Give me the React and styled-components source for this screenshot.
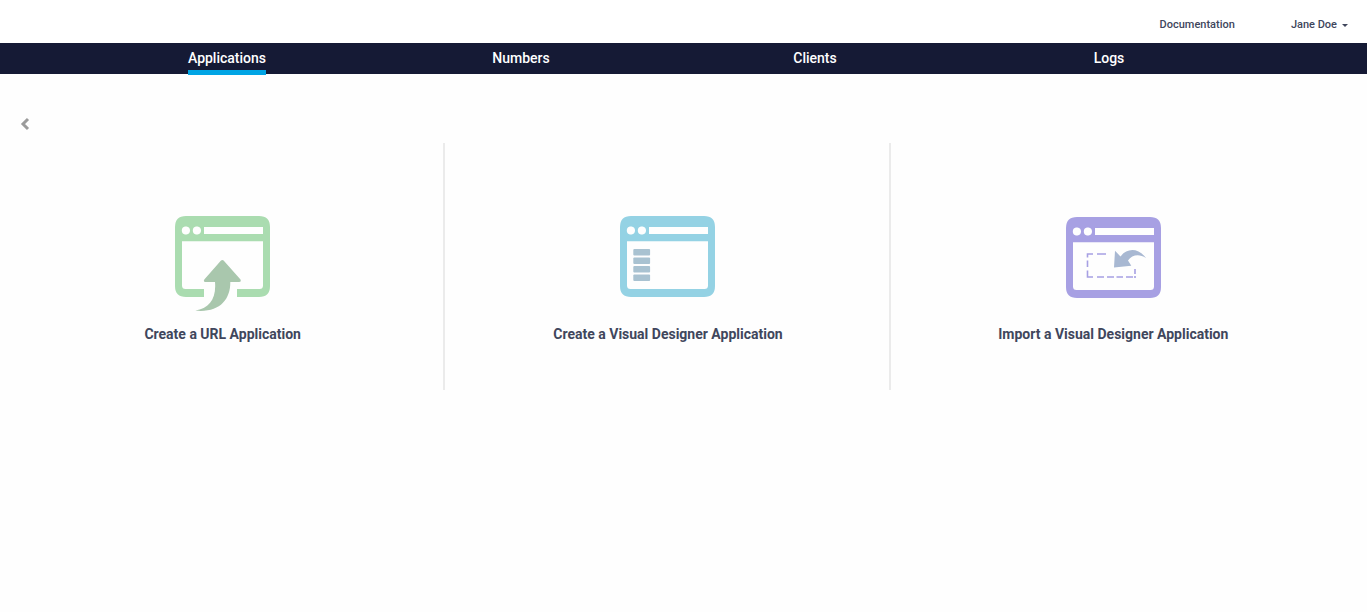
import React from "react";
import styled, { createGlobalStyle } from "styled-components";

const GlobalStyle = createGlobalStyle`
  *, *::before, *::after { box-sizing: border-box; }
  body {
    margin: 0;
    background: #fefefe;
    color: #40465c;
    font-family: Roboto, "Liberation Sans", sans-serif;
  }
  a { color: inherit; text-decoration: none; }
`;

const TopBar = styled.header`
  display: flex;
  justify-content: flex-end;
  align-items: center;
  gap: 56px;
  padding: 17px 19px 10px;
  background: #fff;
  font-size: 11px;
  font-weight: 500;
  line-height: 16px;
`;

const DocLink = styled.a``;

const UserButton = styled.button`
  display: flex;
  align-items: center;
  gap: 5px;
  padding: 0;
  border: 0;
  background: none;
  color: inherit;
  font: inherit;
  cursor: pointer;
`;

const Caret = styled.span`
  margin-top: 1px;
  border: 3px solid transparent;
  border-top-color: currentColor;
  border-bottom-width: 0;
`;

const NavBar = styled.nav`
  display: grid;
  grid-template-columns: repeat(4, 1fr);
  justify-items: center;
  height: 31px;
  padding: 0 111px 0 80px;
  background: #151a35;
`;

const NavLink = styled.a`
  height: 32px;
  color: #fff;
  font-size: 14px;
  font-weight: 500;
  line-height: 30px;
  box-shadow: ${({ $active }) => ($active ? "inset 0 -5px #00a4e4" : "none")};
`;

const BackRow = styled.div`
  display: flex;
  padding: 43px 20px 11px;
`;

const BackButton = styled.button`
  display: flex;
  padding: 0;
  border: 0;
  background: none;
  color: #9b9b9b;
  cursor: pointer;
`;

const Choices = styled.main`
  display: grid;
  grid-template-columns: repeat(3, 1fr);
  margin-right: 31px;
`;

const Choice = styled.a`
  display: flex;
  flex-direction: column;
  align-items: center;
  gap: 12px;
  padding: 73px 0 45px;
  box-shadow: ${({ $last }) => ($last ? "none" : "inset -2px 0 #ebebeb")};
`;

const ChoiceTitle = styled.span`
  font-size: 14px;
  font-weight: 700;
  line-height: 22px;
`;

const CONTROLS =
  "M10 10.500H11.500Q15 11 15 14.500Q15 18 11.500 18.500H10Q6.800 18 6.800 14.500Q6.800 11 10 10.500Z" +
  "M21 10.500H22.500Q26 11 26 14.500Q26 18 22.500 18.500H21Q17.800 18 17.800 14.500Q17.800 11 21 10.500Z" +
  "M29 11V18H88V11Z";

const FRAME =
  "M11 0H84Q95 0 95 11V70Q95 81 84 81H11Q0 81 0 70V11Q0 0 11 0Z" +
  "M7 25.300V69.500Q7 73 10.500 73H84.500Q88 73 88 69.500V25.300Z" +
  CONTROLS;

const OPEN_FRAME =
  "M11 0H84Q95 0 95 11V70Q95 81 84 81H62V73H84.500Q88 73 88 69.500V25.300H7V69.500Q7 73 10.500 73H29V81H11Q0 81 0 70V11Q0 0 11 0Z" +
  CONTROLS;

function UrlIcon() {
  return (
    <svg width="95" height="95" viewBox="0 0 95 95" aria-hidden="true">
      <path fill="#aadcb0" fillRule="evenodd" d={OPEN_FRAME} />
      <path
        fill="#a9c7ad"
        d="M46 44.600Q47.300 43.500 48.600 44.600L65.500 63.500Q66.500 66 64 66H55.300C55.500 84 44 97 20.300 94.600C34 92 41.500 83 40 66H30.500Q28 66 29.300 63.500Z"
      />
    </svg>
  );
}

function DesignerIcon() {
  return (
    <svg width="95" height="95" viewBox="0 0 95 95" aria-hidden="true">
      <path fill="#94d2e4" fillRule="evenodd" d={FRAME} />
      <g fill="#a9c2d1">
        {[33, 41.5, 50, 58.5].map((y) => (
          <rect key={y} x="13.300" y={y} width="16.800" height="6.500" rx="1" />
        ))}
      </g>
    </svg>
  );
}

function ImportIcon() {
  return (
    <svg width="95" height="95" viewBox="0 -1 95 95" aria-hidden="true">
      <path fill="#a7a0e3" fillRule="evenodd" d={FRAME} />
      <path
        fill="none"
        stroke="#a7a0e3"
        strokeWidth="1.600"
        d="M21.500 40.500V37H27M31 37H40M21.500 43.500V50M21.500 53.500V60H27M31 60H38M41 60H48M50.500 60H57M60 60H67M69 52V57M69 59V61"
      />
      <path
        fill="#a8b8d2"
        d="M49 33.800L54.500 39.500C61 31 72 30.500 80 41C73 36.500 66 38 62 43.500L65.300 48.800L48 50.500Z"
      />
    </svg>
  );
}

const navItems = ["Applications", "Numbers", "Clients", "Logs"];

const choices = [
  { title: "Create a URL Application", Icon: UrlIcon },
  { title: "Create a Visual Designer Application", Icon: DesignerIcon },
  { title: "Import a Visual Designer Application", Icon: ImportIcon },
];

export default function App() {
  return (
    <>
      <GlobalStyle />
      <TopBar>
        <DocLink href="#documentation">Documentation</DocLink>
        <UserButton type="button" aria-haspopup="menu">
          Jane Doe
          <Caret />
        </UserButton>
      </TopBar>
      <NavBar>
        {navItems.map((name, i) => (
          <NavLink key={name} href={`#${name.toLowerCase()}`} $active={i === 0}>
            {name}
          </NavLink>
        ))}
      </NavBar>
      <BackRow>
        <BackButton type="button" aria-label="Back">
          <svg width="10" height="15" viewBox="0 0 10 15" aria-hidden="true">
            <path d="M8 2L3 7L8 12" fill="none" stroke="currentColor" strokeWidth="3" />
          </svg>
        </BackButton>
      </BackRow>
      <Choices>
        {choices.map(({ title, Icon }, i) => (
          <Choice key={title} href="#new" $last={i === choices.length - 1}>
            <Icon />
            <ChoiceTitle>{title}</ChoiceTitle>
          </Choice>
        ))}
      </Choices>
    </>
  );
}
